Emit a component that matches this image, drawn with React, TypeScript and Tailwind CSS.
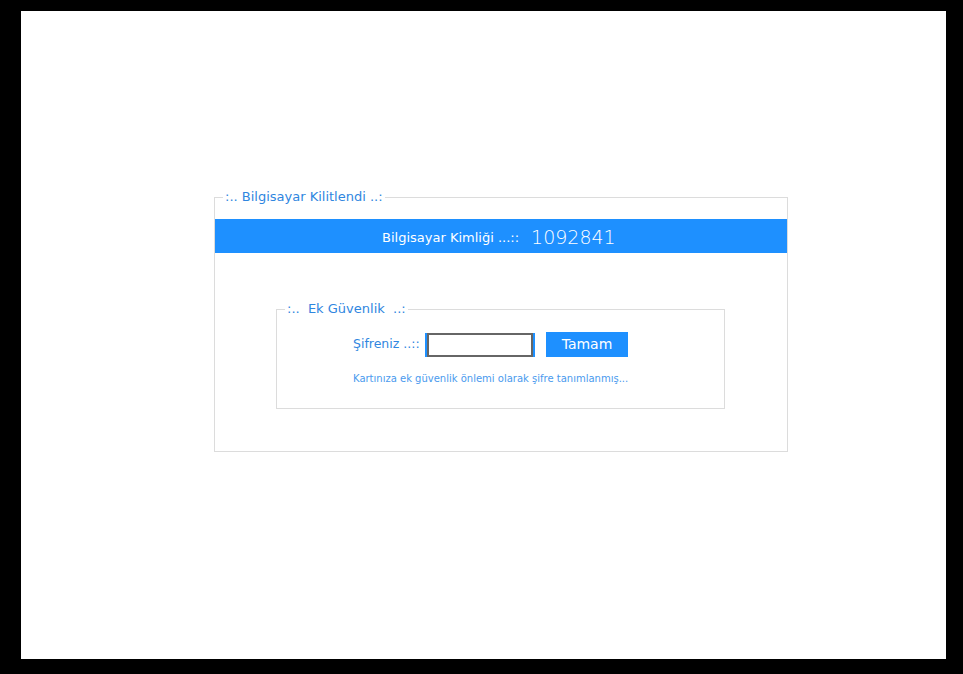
import React from "react";

export default function App() {
  const font = { fontFamily: '"DejaVu Sans", "Noto Sans", sans-serif' };
  return (
    <div className="h-[674px] w-[963px] bg-black pt-[11px] pl-[21px] pr-[17px] pb-[15px]" style={font}>
      <div className="h-[648px] w-[925px] bg-white pt-[178px] pl-[193px]">
        <fieldset className="w-[574px] border border-[#dcdcdc] pb-[42px]">
          <legend className="ml-[8px] px-[2px] text-[13px] leading-[16px] text-[#2f86e0]">:.. Bilgisayar Kilitlendi ..:</legend>
          <div className="mt-[14px] flex h-[34px] items-center gap-[12px] bg-[#1e90ff] pt-[3px] pl-[167px] text-white">
            <span className="text-[13px]">Bilgisayar Kimliği ...::</span>
            <span className="text-[19px] font-extralight leading-none">1092841</span>
          </div>
          <fieldset className="mt-[48px] ml-[61px] w-[449px] border border-[#dcdcdc] pb-[23px]">
            <legend className="ml-[8px] px-[2px] text-[13px] leading-[16px] text-[#2f86e0] whitespace-pre">:..  Ek Güvenlik  ..:</legend>
            <div className="pl-[76px]">
              <div className="mt-[15px] flex items-center">
                <span className="w-[72px] shrink-0 whitespace-nowrap text-[12.5px] text-[#2f86e0]">Şifreniz ..::</span>
                <div className="flex h-[24px] w-[110px] border-x-2 border-[#1e90ff]">
                  <input type="text" className="h-full w-full border-2 border-[#666] bg-white outline-none" />
                </div>
                <button className="ml-[11px] h-[25px] w-[82px] bg-[#1e90ff] text-[14px] text-white">Tamam</button>
              </div>
              <div className="mt-[16px] text-[10px] leading-[12px] text-[#4a9aee]">Kartınıza ek güvenlik önlemi olarak şifre tanımlanmış...</div>
            </div>
          </fieldset>
        </fieldset>
      </div>
    </div>
  );
}
